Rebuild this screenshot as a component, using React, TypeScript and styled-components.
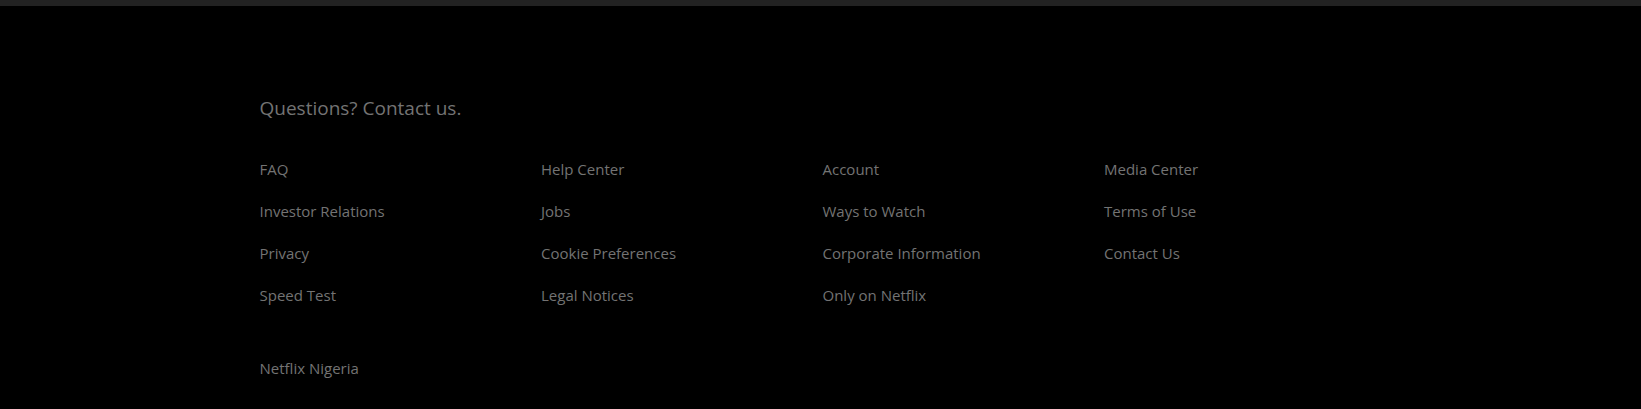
import React from "react";
import styled, { createGlobalStyle } from "styled-components";

const Global = createGlobalStyle`
  html, body { margin: 0; padding: 0; background: #000; }
  body { font-family: "Open Sans", "Noto Sans", Arial, sans-serif; }
`;

const Page = styled.div`
  min-height: 409px;
  background: #000;
  border-top: 6px solid #222;
  box-sizing: border-box;
`;

const Footer = styled.footer`
  width: 1122px;
  margin: 0 auto;
  padding-top: 90px;
  color: #737373;
`;

const Heading = styled.p`
  margin: 0 0 37px;
  font-size: 19px;
  line-height: 24px;
`;

const Grid = styled.ul`
  list-style: none;
  margin: 0;
  padding: 0;
  display: grid;
  grid-template-columns: repeat(4, 1fr);
  column-gap: 4px;
  row-gap: 18px;
  font-size: 15px;
  line-height: 24px;
`;

const Item = styled.li`
  margin: 0;
`;

const Link = styled.a`
  color: #737373;
  text-decoration: none;
`;

const Country = styled.p`
  margin: 49px 0 0;
  font-size: 15px;
  line-height: 24px;
`;

const links = [
  "FAQ", "Help Center", "Account", "Media Center",
  "Investor Relations", "Jobs", "Ways to Watch", "Terms of Use",
  "Privacy", "Cookie Preferences", "Corporate Information", "Contact Us",
  "Speed Test", "Legal Notices", "Only on Netflix",
];

export default function App() {
  return (
    <Page>
      <Global />
      <Footer>
        <Heading>Questions? Contact us.</Heading>
        <Grid>
          {links.map((l) => (
            <Item key={l}>
              <Link href="#">{l}</Link>
            </Item>
          ))}
        </Grid>
        <Country>Netflix Nigeria</Country>
      </Footer>
    </Page>
  );
}
